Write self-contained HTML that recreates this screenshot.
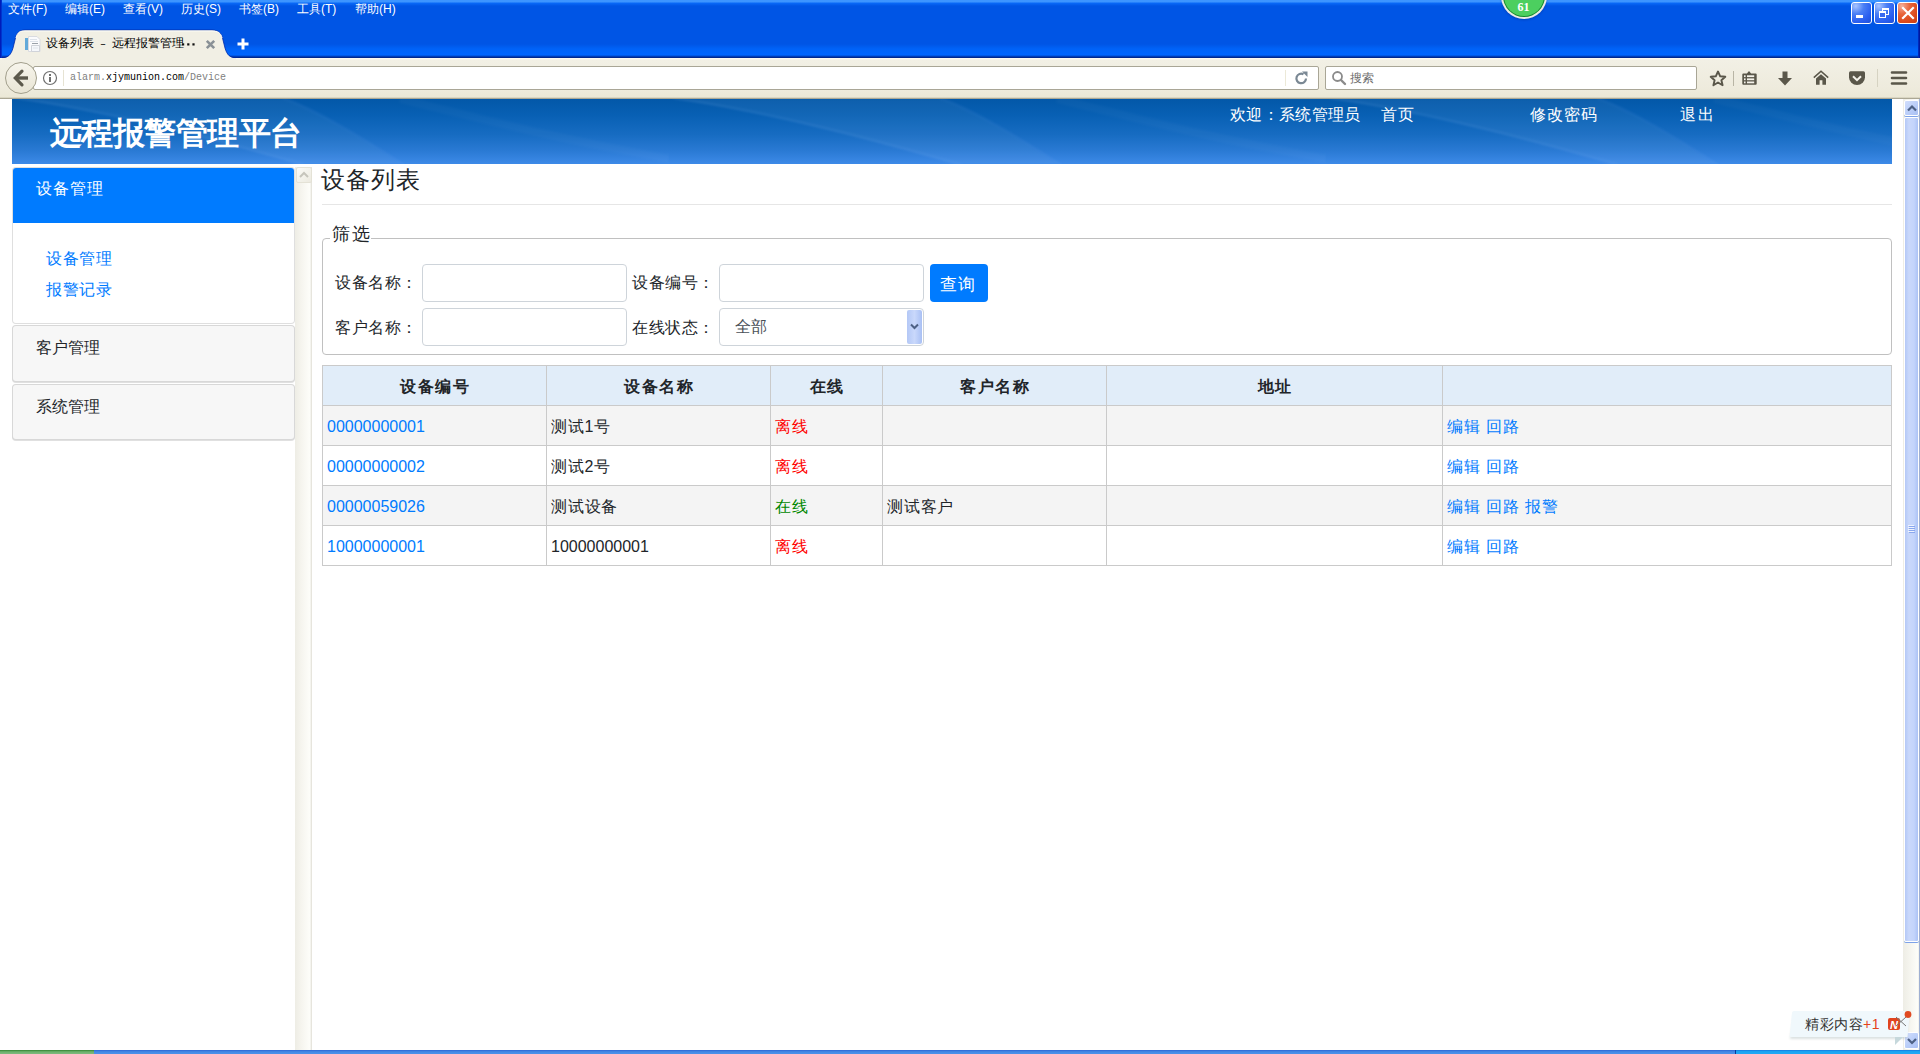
<!DOCTYPE html>
<html><head><meta charset="utf-8">
<style>
*{box-sizing:border-box;margin:0;padding:0}
html,body{width:1920px;height:1054px;overflow:hidden;background:#fff;font-family:"Liberation Sans",sans-serif;color:#212529}
.a{position:absolute}
#tb{left:0;top:0;width:1920px;height:58px;background:linear-gradient(#3d95ff 0,#3d95ff 2px,#0a6af8 3px,#0055e5 6px,#0055e5 44px,#0063f8 49px,#0066ff 55px,#0030a0 57px,#002080 58px)}
#tbl{left:0;top:0;width:2px;height:58px;background:linear-gradient(90deg,#0010b0,#0040d8)}
#tbr{right:0;top:0;width:2px;height:58px;background:linear-gradient(90deg,#0030c8,#001090)}
.mi{top:1px;height:16px;font-size:12px;line-height:16px;color:#fff;white-space:nowrap;letter-spacing:0}
.wb{top:2px;width:21px;height:22px;border:1px solid #fff;border-radius:3px;background:radial-gradient(circle at 20% 15%,#a8c4ff 0,#4a7ff5 35%,#2a5ff0 70%,#1e4fd8 100%)}
.wb.c{background:radial-gradient(circle at 20% 15%,#f4b09a 0,#e8643a 35%,#dc4a1c 70%,#c83c12 100%)}
#nav{left:0;top:58px;width:1920px;height:41px;background:linear-gradient(#fefdf5 0,#f2f0e5 2px,#eeebdd 30px,#ebe8d6 39px,#c8c4b0 40px,#8f8b78 41px)}
#url{left:33px;top:66px;width:1286px;height:24px;background:#fff;border:1px solid #a9a696;border-radius:2px}
#srch{left:1325px;top:66px;width:372px;height:24px;background:#fff;border:1px solid #a9a696;border-radius:2px}
#back{left:5px;top:62px;width:32px;height:32px;border-radius:50%;border:1px solid #a29f8c;background:linear-gradient(#f7f5ec,#e8e5d5)}
.ut{font-family:"Liberation Mono",monospace;font-size:10px;line-height:12px;top:72px;white-space:pre}
#hdr{left:12px;top:99px;width:1880px;height:65px;background:linear-gradient(#0358a8 0,#0860b4 25%,#176cc2 55%,#2a7ad4 80%,#3d8ae8 100%);overflow:hidden}
#sbtrough{left:295px;top:167px;width:17px;height:883px;background:linear-gradient(90deg,#eeede5 0,#f6f5ef 40%,#fdfdf9 85%,#f1f0ea 94%,#dcdad0 100%)}
#vs{left:1903px;top:99px;width:17px;height:951px;background:linear-gradient(90deg,#eeede5,#fdfdf9 85%,#e8e7e0)}
#task{left:0;top:1050px;width:1920px;height:4px;background:linear-gradient(#2a5fd0 0,#3c7fe0 1px,#4a90e8 3px)}
#start{left:0;top:1050px;width:94px;height:4px;background:linear-gradient(#2a7a2a 0,#5aa55a 1px,#7ab87a 3px)}

.t16{font-size:16px;line-height:24px;white-space:nowrap}
#title{left:50px;top:113px;font-size:32px;letter-spacing:-0.55px;line-height:40px;font-weight:bold;color:#fff;white-space:nowrap}
.hl{top:103px;color:#fff}
.card{border:1px solid rgba(0,0,0,.125);border-radius:4px;background:#fff}
.ch{background:#f7f7f7}
.sl{color:#007bff}
#ptitle{left:321px;top:165px;font-size:24px;letter-spacing:1px;line-height:30px;color:#212529;white-space:nowrap}
#hr{left:322px;top:204px;width:1570px;height:1px;background:#e6e6e6}
#fs{left:322px;top:238px;width:1570px;height:117px;border:1px solid #c0c0c0;border-radius:4px}
#lg{left:330px;top:222px;padding:0 0 0 2px;background:#fff;font-size:18px;letter-spacing:1.5px;line-height:24px;color:#212529;white-space:nowrap}
.inp{width:205px;height:38px;border:1px solid #ced4da;border-radius:4px;background:#fff}
.lbl{color:#212529;letter-spacing:0.5px}
#btn{left:930px;top:264px;width:58px;height:38px;background:#007bff;border-radius:4px;color:#fff;text-align:center;font-size:16px;line-height:41px;letter-spacing:1px;text-indent:-2px;font-size:17px}
table.tb{position:absolute;left:322px;top:365px;width:1570px;border-collapse:collapse;font-size:16px;table-layout:fixed}
.tb td,.tb th{border:1px solid #cacaca;height:40px;padding:2px 4px 0;vertical-align:middle;white-space:nowrap;line-height:24px}
.tb th{background:#e1edf9;font-weight:bold;letter-spacing:1.4px;text-indent:1.4px;text-align:center;color:#212529}
.tb tr.s td{background:#f4f4f4}
.tb td{letter-spacing:0.8px}
.tb td.n,.tb td.n a{letter-spacing:0}
.tb a{color:#007bff;text-decoration:none}
.red{color:#f00}.grn{color:#080}
</style></head><body>
<div id="tb" class="a"></div>
<div id="tbl" class="a"></div>
<div id="tbr" class="a"></div>
<div class="a mi" style="left:8px">文件(F)</div>
<div class="a mi" style="left:65px">编辑(E)</div>
<div class="a mi" style="left:123px">查看(V)</div>
<div class="a mi" style="left:181px">历史(S)</div>
<div class="a mi" style="left:239px">书签(B)</div>
<div class="a mi" style="left:297px">工具(T)</div>
<div class="a mi" style="left:355px">帮助(H)</div>
<!-- badge -->
<svg class="a" style="left:1496px;top:0" width="56" height="24" viewBox="0 0 56 24">
 <defs><filter id="sh" x="-20%" y="-20%" width="140%" height="140%"><feGaussianBlur stdDeviation="1"/></filter></defs>
 <circle cx="28" cy="-3" r="23" fill="#00207a" opacity=".35" filter="url(#sh)"/>
 <circle cx="28" cy="-4" r="23" fill="#ecebe6"/>
 <circle cx="28" cy="-4" r="21" fill="#148a2c"/>
 <circle cx="28" cy="-4" r="20" fill="#4ccf5f"/>
 <text x="27.5" y="10.5" font-family="Liberation Serif" font-weight="bold" font-size="12" fill="#fff" text-anchor="middle">61</text>
</svg>
<div class="a wb" style="left:1851px"><div class="a" style="left:4px;top:12px;width:7px;height:3px;background:#fff"></div></div>
<div class="a wb" style="left:1874px"><div class="a" style="left:7px;top:5px;width:7px;height:7px;border:1px solid #fff;border-top-width:2px"></div><div class="a" style="left:4px;top:8px;width:7px;height:7px;border:1px solid #fff;border-top-width:2px;background:#3a6af0"></div></div>
<div class="a wb c" style="left:1897px"><svg class="a" style="left:3px;top:3px" width="14" height="14"><path d="M2 2L12 12M12 2L2 12" stroke="#fff" stroke-width="2.2" stroke-linecap="square"/></svg></div>

<!-- tab -->
<svg class="a" style="left:0;top:28px" width="260" height="31" viewBox="0 28 260 31">
 <path d="M0,58.5 C8,58.5 11,55 13,48 L15,40 C16.5,33 19,30 25,30 L212,30 C219,30 222,34 223,40 L225,48 C227,55 230,58.5 238,58.5 Z" fill="#f1efe4"/>
 <path d="M0,58 C8,58 11,55 13,48 L15,40 C16.5,33 19,30 25,30 L212,30 C219,30 222,34 223,40 L225,48 C227,55 230,58 238,58" fill="none" stroke="#0028a8" stroke-width="1" opacity=".8"/>
 <path d="M0,59 H240" stroke="#f1efe4" stroke-width="2"/>
 <path d="M16,38 C17.5,32 20,31 25,31 L212,31 C218,31 221,33 222,38" fill="none" stroke="#fefdf5" stroke-width="1"/>
 <path d="M237.5,44 h11 M243,38.5 v11" stroke="#fff" stroke-width="3"/>
 <path d="M206.8,40.8 l7.4,7.4 M214.2,40.8 l-7.4,7.4" stroke="#8a9196" stroke-width="2.6"/>
</svg>
<svg class="a" style="left:24px;top:35px" width="17" height="18" viewBox="24 35 17 18">
 <path d="M28.5,36.5 H37 L40,39.5 V51.5 H28.5 Z" fill="#fbfbfd" stroke="#d9dbe0" stroke-width="1"/>
 <rect x="25" y="38" width="3" height="12" fill="#62a9d9"/>
 <rect x="30" y="39" width="7" height="1" fill="#dde2ea"/><rect x="30" y="41" width="8" height="1" fill="#dde2ea"/>
 <rect x="32" y="43" width="6" height="1" fill="#9aa0a8"/>
 <path d="M31.5,45.5 H39.5 V51.5 H31.5 Z" fill="#f5f7fb" stroke="#d0d3d9" stroke-width="1"/>
 <rect x="33" y="47.5" width="5" height="1" fill="#e0e4ea"/>
</svg>
<div class="a" style="left:46px;top:35px;font-size:12px;line-height:16px;color:#000;white-space:pre">设备列表<span style="font-family:'Liberation Mono',monospace;font-size:10px"> – </span>远程报警管理</div>
<svg class="a" style="left:180px;top:41px" width="18" height="6"><rect x="2" y="2.3" width="2.2" height="2.2" fill="#111"/><rect x="7.2" y="2.3" width="2.2" height="2.2" fill="#111"/><rect x="12.4" y="2.3" width="2.2" height="2.2" fill="#111"/></svg>

<div id="nav" class="a"></div>
<div class="a" style="left:2px;top:58px;width:234px;height:2px;background:#f1efe4"></div>
<div id="url" class="a"></div>
<div id="back" class="a"><svg class="a" style="left:-1px;top:-1px" width="32" height="32" viewBox="5 62 32 32"><path d="M22,71.2 L15.3,78 L22,84.8" fill="none" stroke="#5c594c" stroke-width="3.2" stroke-linecap="round" stroke-linejoin="miter"/><path d="M16.5,78 H28" stroke="#5c594c" stroke-width="3.4"/></svg></div>
<svg class="a" style="left:42px;top:70px" width="16" height="16"><circle cx="8" cy="8" r="6.5" fill="none" stroke="#6f6f6f" stroke-width="1.2"/><rect x="7" y="7" width="2" height="5" fill="#6f6f6f"/><rect x="7" y="4" width="2" height="2" fill="#6f6f6f"/></svg>
<div class="a" style="left:63px;top:70px;width:1px;height:16px;background:#e6e3d3"></div>
<div class="a ut" style="left:70px;color:#808080">alarm.<span style="color:#000">xjymunion.com</span>/Device</div>
<div class="a" style="left:1285px;top:70px;width:1px;height:16px;background:#ece9d8"></div>
<svg class="a" style="left:1294px;top:71px" width="15" height="15" viewBox="0 0 15 15"><path d="M12,7.5 A4.8,4.8 0 1 1 9.5,3.2" fill="none" stroke="#7a8894" stroke-width="2.2"/><path d="M8,0.5 L13.5,0.5 L13.5,6 Z" fill="#7a8894"/></svg>
<div id="srch" class="a"></div>
<svg class="a" style="left:1331px;top:70px" width="16" height="16"><circle cx="6.5" cy="6.5" r="4.5" fill="none" stroke="#8a8a8a" stroke-width="1.8"/><path d="M10,10 L14,14" stroke="#8a8a8a" stroke-width="2.4" stroke-linecap="round"/></svg>
<div class="a" style="left:1350px;top:70px;font-size:12px;line-height:16px;color:#6d6d6d">搜索</div>
<!-- toolbar icons -->
<svg class="a" style="left:1708px;top:69px" width="200" height="18" viewBox="1708 69 200 18">
 <g fill="none" stroke="#5a574a" stroke-width="1.9" stroke-linejoin="round">
  <path d="M1718,71.5 L1720.2,76.3 L1725.3,76.8 L1721.4,80.2 L1722.6,85.2 L1718,82.5 L1713.4,85.2 L1714.6,80.2 L1710.7,76.8 L1715.8,76.3 Z"/>
 </g>
 <rect x="1733" y="71" width="1" height="15" fill="#b8b5a5"/>
 <path d="M1742.3,73.6 h4.6 l2.1,-2.6 l2.1,2.6 h4.6 a1,1 0 0 1 1,1 v9.2 a1,1 0 0 1 -1,1 h-12.4 a1,1 0 0 1 -1,-1 v-9.2 a1,1 0 0 1 1,-1z" fill="#5a574a"/>
 <rect x="1744" y="75.3" width="1.6" height="1.8" fill="#f4f2ea"/><rect x="1747" y="75.3" width="7.2" height="1.8" fill="#f4f2ea"/>
 <rect x="1744" y="78.4" width="1.6" height="1.8" fill="#f4f2ea"/><rect x="1747" y="78.4" width="7.2" height="1.8" fill="#f4f2ea"/>
 <rect x="1744" y="81.5" width="1.6" height="1.8" fill="#f4f2ea"/><rect x="1747" y="81.5" width="7.2" height="1.8" fill="#f4f2ea"/>
 <path d="M1782.5,71.5 h5 v6.5 h4.5 l-7,7.5 l-7,-7.5 h4.5z" fill="#5a574a"/>
 <path d="M1813.8,77.6 L1821,71.2 L1828.2,77.6" fill="none" stroke="#5a574a" stroke-width="1.6"/>
 <path d="M1821,74.3 L1826,78.6 V84.7 H1822.4 V80.2 H1819.6 V84.7 H1816 V78.6 Z" fill="#5a574a"/>
 <path d="M1850.5,71.3 h13 a1.5,1.5 0 0 1 1.5,1.5 v4.4 a8,7.7 0 0 1 -16,0 v-4.4 a1.5,1.5 0 0 1 1.5,-1.5z" fill="#5a574a"/>
 <path d="M1853,76.2 l4,4 l4,-4" fill="none" stroke="#f4f2ea" stroke-width="2"/>
 <rect x="1877" y="58" width="1" height="41" fill="#d6d3c2"/>
 <path d="M1892,72.5 h14 M1892,78 h14 M1892,83.5 h14" stroke="#5a574a" stroke-width="2.6" stroke-linecap="round"/>
</svg>

<div id="hdr" class="a"><svg width="1880" height="65" style="position:absolute;left:0;top:0">
 <defs>
  <filter id="bl" x="-5%" y="-20%" width="110%" height="140%"><feGaussianBlur stdDeviation="1.2"/></filter>
  <pattern id="sw" x="0" y="0" width="657" height="65" patternUnits="userSpaceOnUse">
   <g filter="url(#bl)">
   <path d="M4,0 C90,12 200,40 288,65 L388,65 C350,40 310,15 271,0 Z" fill="#fff" opacity=".045"/>
   <path d="M4,-1 C90,11 200,39 292,66" fill="none" stroke="#9cc8ff" stroke-width="2" opacity=".10"/>
   <path d="M271,-1 C310,14 350,39 392,66" fill="none" stroke="#9cc8ff" stroke-width="2" opacity=".10"/>
   <path d="M388,0 C440,12 520,35 657,60" fill="none" stroke="#fff" stroke-width="8" opacity=".025"/>
   </g>
  </pattern>
 </defs>
 <rect width="1880" height="65" fill="url(#sw)"/>
</svg></div>

<div id="title" class="a">远程报警管理平台</div>
<div class="a t16 hl" style="left:1230px;letter-spacing:0.35px">欢迎：系统管理员</div>
<div class="a t16 hl" style="left:1381px;letter-spacing:1px">首页</div>
<div class="a t16 hl" style="left:1530px;letter-spacing:1px">修改密码</div>
<div class="a t16 hl" style="left:1680px;letter-spacing:2px">退出</div>

<!-- sidebar -->
<div class="a card" style="left:12px;top:167px;width:283px;height:157px;overflow:hidden">
 <div class="a" style="left:-1px;top:-1px;width:283px;height:56px;background:#007bff"></div>
</div>
<div class="a t16" style="left:36px;top:177px;color:#fff;letter-spacing:1px">设备管理</div>
<div class="a t16 sl" style="left:46px;top:247px;letter-spacing:0.6px">设备管理</div>
<div class="a t16 sl" style="left:46px;top:278px;letter-spacing:0.6px">报警记录</div>
<div class="a card ch" style="left:12px;top:325px;width:283px;height:57px;box-shadow:0 1px 0 #e0e0e0"></div>
<div class="a t16" style="left:36px;top:336px;color:#212529">客户管理</div>
<div class="a card ch" style="left:12px;top:384px;width:283px;height:56px;box-shadow:0 1px 0 #e0e0e0"></div>
<div class="a t16" style="left:36px;top:395px;color:#212529">系统管理</div>

<!-- main -->
<div id="ptitle" class="a">设备列表</div>
<div id="hr" class="a"></div>
<div id="fs" class="a"></div>
<div id="lg" class="a">筛选</div>
<div class="a t16 lbl" style="left:335px;top:271px">设备名称：</div>
<div class="a inp" style="left:422px;top:264px"></div>
<div class="a t16 lbl" style="left:632px;top:271px">设备编号：</div>
<div class="a inp" style="left:719px;top:264px"></div>
<div id="btn" class="a">查询</div>
<div class="a t16 lbl" style="left:335px;top:316px">客户名称：</div>
<div class="a inp" style="left:422px;top:308px"></div>
<div class="a t16 lbl" style="left:632px;top:316px">在线状态：</div>
<div class="a inp" style="left:719px;top:308px"></div>
<div class="a t16" style="left:735px;top:315px;color:#495057">全部</div>
<div class="a" style="left:907px;top:310px;width:15px;height:34px;border-radius:2px;background:linear-gradient(90deg,#b4c8f6,#c9d8fb 50%,#a9c0f4)"></div>
<svg class="a" style="left:909px;top:321px" width="11" height="11"><path d="M2,3.5 L5.5,7 L9,3.5" fill="none" stroke="#4d6185" stroke-width="2"/></svg>

<table class="tb">
<colgroup><col style="width:224px"><col style="width:224px"><col style="width:112px"><col style="width:224px"><col style="width:336px"><col></colgroup>
<tr><th>设备编号</th><th>设备名称</th><th>在线</th><th>客户名称</th><th>地址</th><th></th></tr>
<tr class="s"><td class="n"><a>00000000001</a></td><td>测试1号</td><td class="red">离线</td><td></td><td></td><td><a>编辑</a> <a>回路</a></td></tr>
<tr><td class="n"><a>00000000002</a></td><td>测试2号</td><td class="red">离线</td><td></td><td></td><td><a>编辑</a> <a>回路</a></td></tr>
<tr class="s"><td class="n"><a>00000059026</a></td><td>测试设备</td><td class="grn">在线</td><td>测试客户</td><td></td><td><a>编辑</a> <a>回路</a> <a>报警</a></td></tr>
<tr><td class="n"><a>10000000001</a></td><td class="n">10000000001</td><td class="red">离线</td><td></td><td></td><td><a>编辑</a> <a>回路</a></td></tr>
</table>
<div id="sbtrough" class="a"></div>
<div id="vs" class="a"></div>

<!-- sidebar scroll up arrow (disabled) -->
<div class="a" style="left:296px;top:167px;width:16px;height:16px;border:1px solid #e4e2d6;border-radius:2px;background:linear-gradient(135deg,#fbfbf7,#eceae0)"></div>
<svg class="a" style="left:298px;top:170px" width="12" height="10"><path d="M2,7 L6,3 L10,7" fill="none" stroke="#c6c5bc" stroke-width="2"/></svg>
<!-- main scrollbar -->
<div class="a" style="left:1904px;top:100px;width:15px;height:16px;border:1px solid #fff;border-radius:2px;background:linear-gradient(135deg,#d2defc 0,#bccff9 50%,#a9c0f4 100%);box-shadow:0 1px 0 #7da2e8"></div>
<svg class="a" style="left:1906px;top:103px" width="12" height="10"><path d="M2,7.5 L6,3.5 L10,7.5" fill="none" stroke="#4d6185" stroke-width="2.2"/></svg>
<div class="a" style="left:1904px;top:117px;width:15px;height:825px;border:1px solid #fff;border-radius:2px;background:linear-gradient(90deg,#b4c8f6 0,#c9d8fb 30%,#c3d4fb 70%,#abc2f5 100%);box-shadow:0 1px 0 #7da2e8"></div>
<svg class="a" style="left:1907px;top:524px" width="10" height="10"><g fill="#eef3ff"><rect x="1" y="1" width="6" height="1"/><rect x="1" y="3" width="6" height="1"/><rect x="1" y="5" width="6" height="1"/><rect x="1" y="7" width="6" height="1"/></g><g fill="#8aa8ee"><rect x="2" y="2" width="6" height="1"/><rect x="2" y="4" width="6" height="1"/><rect x="2" y="6" width="6" height="1"/><rect x="2" y="8" width="6" height="1"/></g></svg>
<div class="a" style="left:1919px;top:99px;width:1px;height:951px;background:#9fb0d2"></div>
<div class="a" style="left:1904px;top:1032px;width:15px;height:17px;border:1px solid #fff;border-radius:2px;background:linear-gradient(135deg,#d2defc 0,#bccff9 50%,#a9c0f4 100%)"></div>
<svg class="a" style="left:1906px;top:1036px" width="12" height="10"><path d="M2,3 L6,7 L10,3" fill="none" stroke="#4d6185" stroke-width="2.2"/></svg>
<!-- popup -->
<svg class="a" style="left:1784px;top:1006px" width="136" height="44" viewBox="1784 1006 136 44">
 <defs><filter id="ps" x="-10%" y="-30%" width="120%" height="160%"><feGaussianBlur stdDeviation="1.2"/></filter></defs>
 <path d="M1794,1013 L1909,1013 L1907,1039 L1790,1039 Z" fill="#9aa" opacity=".35" filter="url(#ps)"/>
 <path d="M1794,1011 L1910,1011 L1907.5,1037 L1791,1037 Q1789.5,1037 1789.8,1035.5 L1792,1012.5 Q1792.3,1011 1794,1011 Z" fill="#f0f8fc"/>
 <path d="M1895,1037 L1903,1037 L1895,1045 Z" fill="#c6d8dc"/>
 <rect x="1888" y="1018" width="12" height="12" rx="2" fill="#e0441e"/>
 <text x="1894" y="1028.5" font-family="Liberation Sans" font-weight="bold" font-style="italic" font-size="11" fill="#fff" text-anchor="middle">N</text>
 <path d="M1896,1017 L1906,1026 M1896,1026 L1906,1017" stroke="#777" stroke-width="1"/>
 <circle cx="1908" cy="1014.5" r="3.4" fill="#e04a22"/>
</svg>
<div class="a" style="left:1805px;top:1014px;font-size:14px;line-height:20px;color:#333;white-space:nowrap;letter-spacing:0.5px">精彩内容<span style="color:#e5431b">+1</span></div>
<div id="task" class="a"></div>
<div id="start" class="a"></div>
<div class="a" style="left:1735px;top:1050px;width:185px;height:4px;background:linear-gradient(#1a6ad8 0,#18a0f0 1px,#20a8f4 3px);border-left:1px solid #0a3a9a"></div>
</body></html>
